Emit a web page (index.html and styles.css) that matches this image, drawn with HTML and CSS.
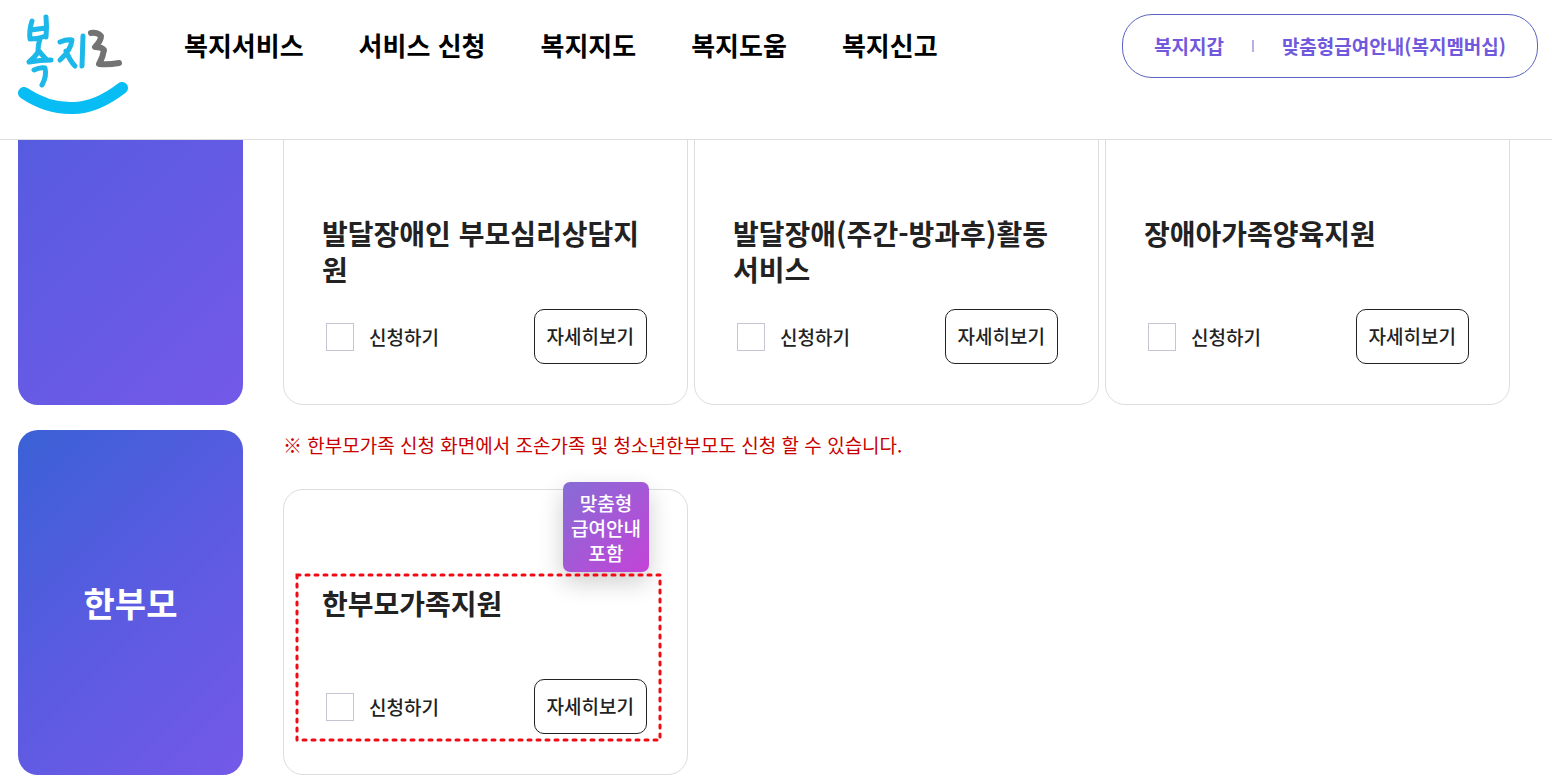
FILE: index.html
```html
<!DOCTYPE html>
<html lang="ko">
<head>
<meta charset="utf-8">
<meta name="viewport" content="width=device-width, initial-scale=1">
<title>복지로</title>
<link rel="stylesheet" href="styles.css">
</head>
<body>
<header class="header">
  <a class="logo" href="#" aria-label="복지로">
    <svg viewBox="0 0 112 102" width="112" height="102" fill="none" stroke-linecap="round" stroke-linejoin="round">
      <g stroke="#1cb8ea" stroke-width="5">
        <path d="M15 7Q12 16 13 25Q21 25 29 22M29 3Q30 12 29 23M14 16Q21 15 29 14M23 25Q21 31 21 36M12 48Q18 43 22 37Q25 41 29 45M12 48Q23 46 34 46M17 56Q23 53 28 54Q30 62 25 71"/>
        <path d="M43 28Q50 25 55 26Q54 36 43 46M49 37Q53 47 58 52M66 22L65 52"/>
      </g>
      <path d="M74 19Q80 18 84 22Q84 27 78 33Q85 33 87 36Q86 43 82 50Q91 51 102 49" stroke="#737373" stroke-width="6"/>
      <path d="M7 79Q31 95 56 94Q79 94 105 74" stroke="#07bdf3" stroke-width="12"/>
    </svg>
  </a>
  <nav class="nav" aria-label="주 메뉴">
    <a href="#">복지서비스</a>
    <a href="#">서비스 신청</a>
    <a href="#">복지지도</a>
    <a href="#">복지도움</a>
    <a href="#">복지신고</a>
  </nav>
  <div class="quick">
    <a href="#">복지지갑</a>
    <span class="quick-bar"></span>
    <a href="#">맞춤형급여안내(복지멤버십)</a>
  </div>
</header>
<main class="services">
  <section class="group group-tall">
    <div class="panel"></div>
    <div class="content">
      <div class="cards">
        <article class="card">
          <h3 class="title">발달장애인 부모심리상담지원</h3>
          <div class="actions">
            <label class="apply"><input type="checkbox">신청하기</label>
            <button class="detail" type="button">자세히보기</button>
          </div>
        </article>
        <article class="card">
          <h3 class="title">발달장애(주간-방과후)활동 서비스</h3>
          <div class="actions">
            <label class="apply"><input type="checkbox">신청하기</label>
            <button class="detail" type="button">자세히보기</button>
          </div>
        </article>
        <article class="card">
          <h3 class="title">장애아가족양육지원</h3>
          <div class="actions">
            <label class="apply"><input type="checkbox">신청하기</label>
            <button class="detail" type="button">자세히보기</button>
          </div>
        </article>
      </div>
    </div>
  </section>
  <section class="group">
    <h2 class="panel">한부모</h2>
    <div class="content">
      <p class="note">※ 한부모가족 신청 화면에서 조손가족 및 청소년한부모도 신청 할 수 있습니다.</p>
      <div class="cards">
        <article class="card">
          <span class="badge">맞춤형<br>급여안내<br>포함</span>
          <h3 class="title">한부모가족지원</h3>
          <div class="actions">
            <label class="apply"><input type="checkbox">신청하기</label>
            <button class="detail" type="button">자세히보기</button>
          </div>
          <svg class="marker" aria-hidden="true"><rect width="100%" height="100%"/></svg>
        </article>
      </div>
    </div>
  </section>
</main>
</body>
</html>
```

FILE: styles.css
```css
* {
  box-sizing: border-box;
}

body {
  margin: 0;
  overflow-x: hidden;
  background: #fff;
  color: #222;
  font-family: "Noto Sans CJK KR", sans-serif;
  font-size: 19px;
}

h2, h3, p {
  margin: 0;
}

a {
  color: inherit;
  text-decoration: none;
}

.header {
  position: sticky;
  top: 0;
  z-index: 10;
  display: flex;
  align-items: flex-start;
  height: 140px;
  padding: 14px 14px 0 17px;
  border-bottom: 1px solid #ddd;
  background: #fff;
}

.logo svg {
  display: block;
}

.nav {
  display: flex;
  gap: 55px;
  margin-left: 55px;
  color: #000;
  font-size: 26px;
  font-weight: 700;
  line-height: 62px;
  white-space: nowrap;
}

.quick {
  display: flex;
  align-items: center;
  gap: 28px;
  height: 64px;
  margin-left: auto;
  padding: 0 31px;
  border: 1px solid #5963c4;
  border-radius: 30px;
  color: #7059dc;
  font-size: 19px;
  font-weight: 700;
  line-height: 26px;
  white-space: nowrap;
}

.quick-bar {
  width: 2px;
  height: 12px;
  background: #b9aee6;
}

/* The list is scrolled part of the way under the header. */
.services {
  display: flex;
  flex-direction: column;
  gap: 25px;
  margin-top: -335px;
  padding: 0 42px 2px 18px;
}

.group {
  display: grid;
  grid-template-columns: 225px 1fr;
  gap: 40px;
}

.group-tall {
  min-height: 600px;
}

.panel {
  display: flex;
  align-items: center;
  justify-content: center;
  border-radius: 20px;
  background: linear-gradient(135deg, #3a61d6, #5b5be1 50%, #7459e8);
  color: #fff;
  font-size: 34px;
  font-weight: 700;
}

.content {
  display: flex;
  flex-direction: column;
  justify-content: flex-end;
  gap: 29px;
}

.note {
  color: #c80000;
  line-height: 30px;
}

.cards {
  display: grid;
  grid-template-columns: repeat(3, 1fr);
  gap: 6px;
}

.card {
  position: relative;
  padding: 95px 40px 40px 38px;
  border: 1px solid #ddd;
  border-radius: 20px;
}

.title {
  min-height: 72px;
  font-size: 28px;
  font-weight: 700;
  line-height: 36px;
}

.actions {
  display: flex;
  align-items: center;
  justify-content: space-between;
  margin-top: 22px;
}

.apply {
  display: flex;
  align-items: center;
  gap: 15px;
  padding-left: 4px;
  font-weight: 500;
}

.apply input {
  width: 28px;
  height: 28px;
  margin: 0;
  border: 1px solid #c5c5d4;
  background: #fff;
  appearance: none;
}

.apply input:checked {
  background: #5b5be1;
}

.detail {
  height: 55px;
  padding: 0 12px 2px;
  border: 1px solid #222;
  border-radius: 10px;
  background: #fff;
  color: #222;
  font: inherit;
  font-weight: 500;
}

.badge {
  position: absolute;
  top: -8px;
  right: 38px;
  padding: 8px 8px 7px;
  border-radius: 7px;
  background: linear-gradient(135deg, #866dd6, #c343d7);
  box-shadow: 0 10px 24px rgba(0, 0, 0, 0.2);
  color: #fff;
  font-weight: 500;
  line-height: 25px;
  text-align: center;
}

.marker {
  position: absolute;
  top: 85px;
  left: 13px;
  width: calc(100% - 40px);
  height: calc(100% - 119px);
  overflow: visible;
  pointer-events: none;
}

.marker rect {
  fill: none;
  stroke: #f00a14;
  stroke-width: 3px;
  stroke-dasharray: 3 6;
  stroke-linecap: round;
}
```
